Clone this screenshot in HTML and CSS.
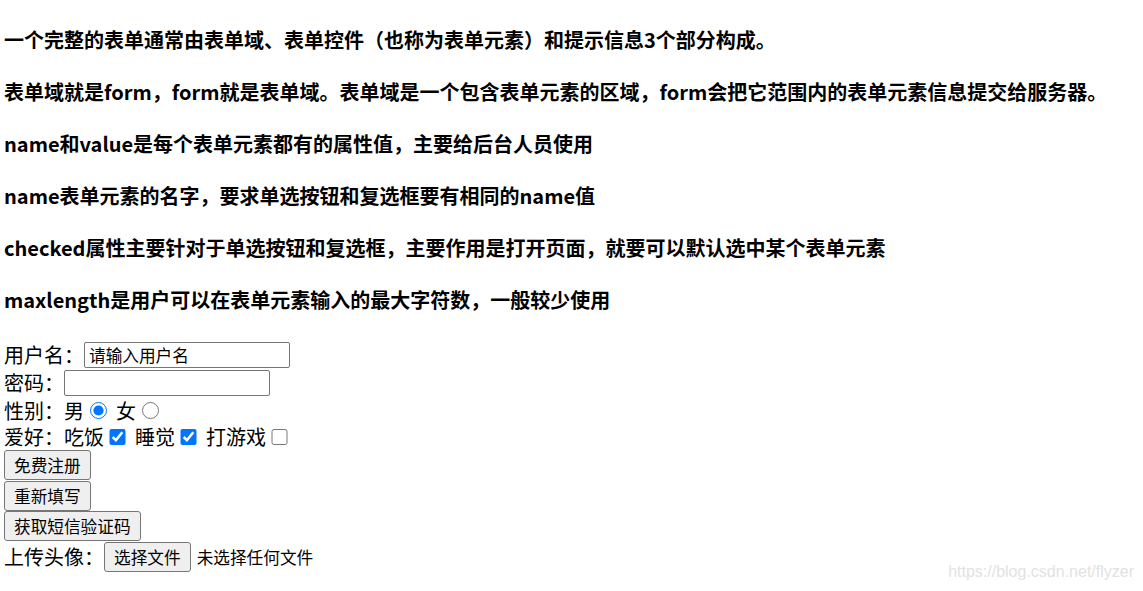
FILE: index.html
```html
<!DOCTYPE html>
<html lang="zh-CN">
<head>
<meta charset="utf-8">
<title>表单</title>
<link rel="stylesheet" href="styles.css">
</head>
<body>
<h4 class="note">一个完整的表单通常由表单域、表单控件（也称为表单元素）和提示信息3个部分构成。</h4>
<h4 class="note">表单域就是form，form就是表单域。表单域是一个包含表单元素的区域，form会把它范围内的表单元素信息提交给服务器。</h4>
<h4 class="note">name和value是每个表单元素都有的属性值，主要给后台人员使用</h4>
<h4 class="note">name表单元素的名字，要求单选按钮和复选框要有相同的name值</h4>
<h4 class="note">checked属性主要针对于单选按钮和复选框，主要作用是打开页面，就要可以默认选中某个表单元素</h4>
<h4 class="note">maxlength是用户可以在表单元素输入的最大字符数，一般较少使用</h4>
<form class="form">
  <div class="row row-input"><span>用户名：</span><input class="text" type="text" placeholder="请输入用户名"></div>
  <div class="row row-input"><span>密码：</span><input class="text" type="password"></div>
  <div class="row row-choice"><span>性别：男</span><input class="radio" type="radio" name="sex" checked><span class="after">女</span><input class="radio" type="radio" name="sex"></div>
  <div class="row row-choice2"><span>爱好：吃饭</span><input class="check" type="checkbox" checked><span class="after">睡觉</span><input class="check" type="checkbox" checked><span class="after">打游戏</span><input class="check" type="checkbox"></div>
  <div class="row row-btn"><button class="btn" type="button">免费注册</button></div>
  <div class="row row-btn"><button class="btn" type="button">重新填写</button></div>
  <div class="row row-btn"><button class="btn" type="button">获取短信验证码</button></div>
  <div class="row row-btn"><span>上传头像：</span><button class="btn" type="button">选择文件</button><span class="file-none">未选择任何文件</span></div>
</form>
<div class="watermark">https://blog.csdn.net/flyzer</div>
</body>
</html>
```
FILE: styles.css
```css
html, body {
  background: #ffffff;
}
body {
  margin: 0;
  padding: 1px 4px 0;
  font-family: "Noto Sans CJK SC", "Microsoft YaHei", sans-serif;
  font-size: 20px;
  color: #000;
}
.note {
  margin: 26.4px 0;
  font-size: 20px;
  line-height: 25.6px;
  font-weight: bold;
  white-space: nowrap;
}
.form {
  margin: 0;
  padding-top: 1.8px;
}
.row {
  display: flex;
  align-items: center;
  line-height: 26px;
  white-space: nowrap;
}
.row-input { height: 28px; }
.row-choice { height: 27px; }
.row-choice2 { height: 26px; }
.row-btn { height: 30.5px; align-items: flex-start; }
.row-btn span { line-height: 30px; }
.text {
  box-sizing: border-box;
  width: 206px;
  height: 26px;
  margin: 0;
  padding: 1px 4px;
  border: 1px solid #767676;
  border-radius: 2px;
  font-family: "Noto Sans CJK SC", "Microsoft YaHei", sans-serif;
  font-size: 16.67px;
  line-height: 22px;
}
.text::placeholder {
  color: #000;
}
.radio {
  width: 16.5px;
  height: 16.5px;
  margin: 0 3.5px 0 6px;
  accent-color: #0075ff;
}
.check {
  width: 16.5px;
  height: 16.5px;
  margin: 0 3.5px 0 5px;
  accent-color: #0075ff;
}
.after {
  margin-left: 6px;
}
.btn {
  box-sizing: border-box;
  height: 30px;
  margin: 0;
  padding: 0 9px;
  border: 1px solid #767676;
  border-radius: 3px;
  background: #efefef;
  color: #000;
  font-family: "Noto Sans CJK SC", "Microsoft YaHei", sans-serif;
  font-size: 16.67px;
  line-height: 28px;
}
.file-none {
  margin-left: 6px;
  font-size: 16.67px;
}
.watermark {
  position: absolute;
  right: 9px;
  top: 563px;
  font-family: "Liberation Sans", Arial, sans-serif;
  font-size: 16px;
  color: #e2e2e2;
}
```
